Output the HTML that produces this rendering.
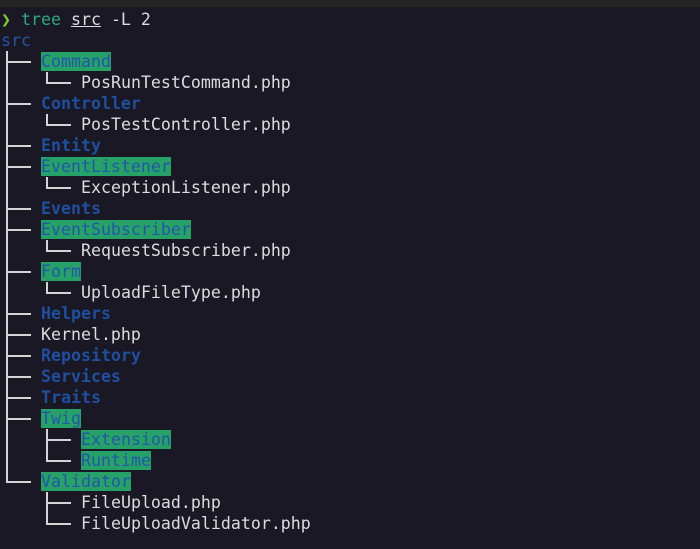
<!DOCTYPE html>
<html><head><style>
body{margin:0;width:700px;height:549px;background:#1a1824;overflow:hidden;font-family:"DejaVu Sans Mono","Liberation Mono",monospace;font-size:16.6px;}
.top{position:absolute;left:0;top:0;width:700px;height:7px;background:#242424}
.r{position:absolute;height:21px;line-height:21px;white-space:pre;color:#dcdcdc}
.d{color:#1f4f9f;font-weight:bold}
.h{background:#26a269;color:#2456a8;font-weight:normal}
.v{position:absolute;width:2px;background:#d4d4d4}
.hz{position:absolute;height:2px;background:#d4d4d4}
</style></head><body>
<div class="top"></div>
<div class="r" style="left:1px;top:9px"><span style="color:#7fd02a">❯</span> <span style="color:#2fa87a">tree</span> <span style="text-decoration:underline;color:#ddd">src</span> -L 2</div>
<div class="r d" style="left:1px;top:30px;font-weight:normal;color:#2456a8">src</div>

<div class="v" style="left:6px;top:51px;height:432px"></div>
<div class="hz" style="left:6px;top:61px;width:25px"></div>
<div class="hz" style="left:6px;top:103px;width:25px"></div>
<div class="hz" style="left:6px;top:145px;width:25px"></div>
<div class="hz" style="left:6px;top:166px;width:25px"></div>
<div class="hz" style="left:6px;top:208px;width:25px"></div>
<div class="hz" style="left:6px;top:229px;width:25px"></div>
<div class="hz" style="left:6px;top:271px;width:25px"></div>
<div class="hz" style="left:6px;top:313px;width:25px"></div>
<div class="hz" style="left:6px;top:334px;width:25px"></div>
<div class="hz" style="left:6px;top:355px;width:25px"></div>
<div class="hz" style="left:6px;top:376px;width:25px"></div>
<div class="hz" style="left:6px;top:397px;width:25px"></div>
<div class="hz" style="left:6px;top:418px;width:25px"></div>
<div class="hz" style="left:6px;top:481px;width:25px"></div>

<div class="v" style="left:46px;top:72px;height:11px"></div><div class="hz" style="left:46px;top:82px;width:25px"></div>
<div class="v" style="left:46px;top:114px;height:11px"></div><div class="hz" style="left:46px;top:124px;width:25px"></div>
<div class="v" style="left:46px;top:177px;height:11px"></div><div class="hz" style="left:46px;top:187px;width:25px"></div>
<div class="v" style="left:46px;top:240px;height:11px"></div><div class="hz" style="left:46px;top:250px;width:25px"></div>
<div class="v" style="left:46px;top:282px;height:11px"></div><div class="hz" style="left:46px;top:292px;width:25px"></div>
<div class="v" style="left:46px;top:429px;height:32px"></div><div class="hz" style="left:46px;top:439px;width:25px"></div><div class="hz" style="left:46px;top:460px;width:25px"></div>
<div class="v" style="left:46px;top:492px;height:32px"></div><div class="hz" style="left:46px;top:502px;width:25px"></div><div class="hz" style="left:46px;top:523px;width:25px"></div>

<div class="r d" style="left:41px;top:51px"><span class="h">Command</span></div>
<div class="r" style="left:81px;top:72px">PosRunTestCommand.php</div>
<div class="r d" style="left:41px;top:93px">Controller</div>
<div class="r" style="left:81px;top:114px">PosTestController.php</div>
<div class="r d" style="left:41px;top:135px">Entity</div>
<div class="r d" style="left:41px;top:156px"><span class="h">EventListener</span></div>
<div class="r" style="left:81px;top:177px">ExceptionListener.php</div>
<div class="r d" style="left:41px;top:198px">Events</div>
<div class="r d" style="left:41px;top:219px"><span class="h">EventSubscriber</span></div>
<div class="r" style="left:81px;top:240px">RequestSubscriber.php</div>
<div class="r d" style="left:41px;top:261px"><span class="h">Form</span></div>
<div class="r" style="left:81px;top:282px">UploadFileType.php</div>
<div class="r d" style="left:41px;top:303px">Helpers</div>
<div class="r" style="left:41px;top:324px">Kernel.php</div>
<div class="r d" style="left:41px;top:345px">Repository</div>
<div class="r d" style="left:41px;top:366px">Services</div>
<div class="r d" style="left:41px;top:387px">Traits</div>
<div class="r d" style="left:41px;top:408px"><span class="h">Twig</span></div>
<div class="r d" style="left:81px;top:429px"><span class="h">Extension</span></div>
<div class="r d" style="left:81px;top:450px"><span class="h">Runtime</span></div>
<div class="r d" style="left:41px;top:471px"><span class="h">Validator</span></div>
<div class="r" style="left:81px;top:492px">FileUpload.php</div>
<div class="r" style="left:81px;top:513px">FileUploadValidator.php</div>
</body></html>
